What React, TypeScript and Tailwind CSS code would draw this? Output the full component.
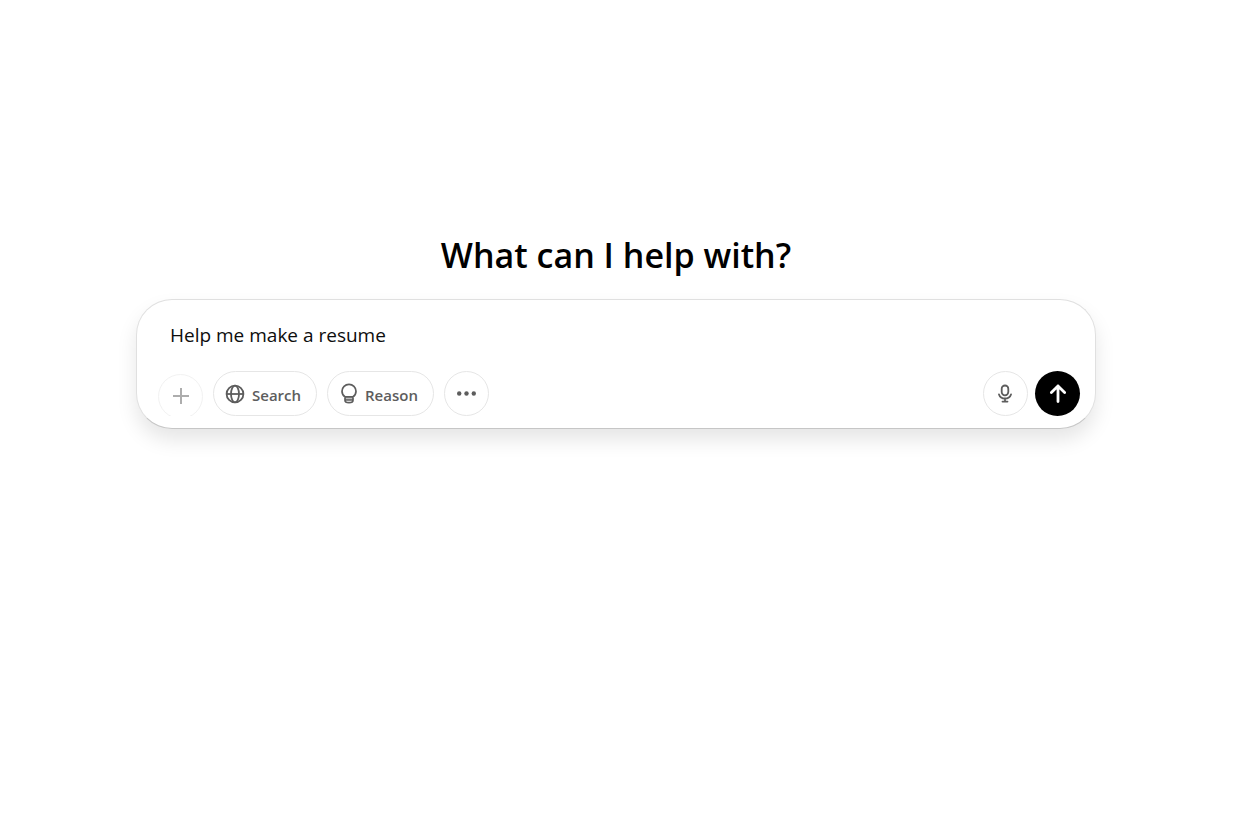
import { useState } from "react";

const outline =
  "flex h-[45px] shrink-0 items-center rounded-full border border-[#e6e6e6] bg-white text-[#5d5d5d]";

function GlobeIcon() {
  return (
    <svg width="20" height="20" viewBox="0 0 20 20" fill="none" stroke="currentColor" strokeWidth="1.8" aria-hidden="true">
      <circle cx="10" cy="10" r="8.4" />
      <ellipse cx="10" cy="10" rx="4" ry="8.4" />
      <path d="M1.6 10h16.8" />
    </svg>
  );
}

function BulbIcon() {
  return (
    <svg width="18" height="21" viewBox="0 0 18 21" aria-hidden="true">
      <path d="M5 14h8v3H5z" fill="currentColor" opacity="0.4" />
      <path
        d="M5.2 14C3.2 12.8 2 10.700 2 8.300a7 6.900 0 0 1 14 0c0 2.400-1.200 4.500-3.200 5.700M5 13.800h8M5 13.800v3.500c0 1.400 1.500 2.400 4 2.400s4-1 4-2.400v-3.500M5 17h8"
        fill="none"
        stroke="currentColor"
        strokeWidth="1.7"
        strokeLinejoin="round"
      />
    </svg>
  );
}

function MicIcon() {
  return (
    <svg width="15" height="19" viewBox="0 0 15 19" fill="none" stroke="currentColor" strokeWidth="1.8" strokeLinecap="round" aria-hidden="true">
      <rect x="3.7" y="1.5" width="6.6" height="9.8" rx="3.3" />
      <path d="M1 10.4c.8 2.5 3 4.1 6 4.1s5.200-1.600 6-4.100M7 14.500v3M4.500 17.600h5" />
    </svg>
  );
}

export default function App() {
  const [message, setMessage] = useState("Help me make a resume");

  return (
    <main className="min-h-screen bg-white pt-[230px] pr-5 font-['Open_Sans','Noto_Sans',sans-serif]">
      <div className="mx-auto w-full max-w-[960px]">
        <h1 className="text-center text-[34px] leading-[50px] font-semibold text-black">What can I help with?</h1>
        <form
          onSubmit={(event) => event.preventDefault()}
          className="mt-[19px] rounded-[36px] border border-[#e0e0e0] border-b-[#c6c6c6] bg-white pt-[19px] pr-[15px] pb-3 pl-[21px] shadow-[0_11px_20px_rgba(0,0,0,0.1)]"
        >
          <input
            type="text"
            aria-label="Message"
            value={message}
            onChange={(event) => setMessage(event.target.value)}
            className="block h-8 w-full bg-transparent px-3 text-[19px] text-[#0d0d0d] outline-none"
          />
          <div className="mt-5 flex items-center justify-between">
            <div className="flex items-end gap-[10px]">
              <div className="h-[42px] overflow-hidden opacity-50">
                <button type="button" aria-label="Attach" className={`${outline} w-[45px] justify-center`}>
                  <svg width="17" height="17" viewBox="0 0 17 17" stroke="currentColor" strokeWidth="2" aria-hidden="true">
                    <path d="M9 0v16M1 8h16" />
                  </svg>
                </button>
              </div>
              <button type="button" className={`${outline} w-[104px] gap-[7px] pl-[11px] text-[15px] font-semibold`}>
                <GlobeIcon />
                <span className="pt-[3px]">Search</span>
              </button>
              <button type="button" className={`${outline} w-[107px] gap-[7px] pl-3 text-[15px] font-semibold`}>
                <BulbIcon />
                <span className="pt-[3px]">Reason</span>
              </button>
              <button type="button" aria-label="More tools" className={`${outline} w-[45px] justify-center`}>
                <svg width="19" height="5" viewBox="0 0 19 5" fill="currentColor" aria-hidden="true">
                  <circle cx="2.2" cy="2.5" r="2.2" />
                  <circle cx="9.5" cy="2.5" r="2.2" />
                  <circle cx="16.8" cy="2.5" r="2.2" />
                </svg>
              </button>
            </div>
            <div className="flex gap-[7px]">
              <button type="button" aria-label="Dictate" className={`${outline} w-[45px] justify-center`}>
                <MicIcon />
              </button>
              <button
                type="submit"
                aria-label="Send"
                className="flex size-[45px] items-center justify-center rounded-full bg-black text-white"
              >
                <svg width="17" height="19" viewBox="0 0 17 19" fill="none" stroke="currentColor" strokeWidth="2.8" strokeLinecap="round" strokeLinejoin="round" aria-hidden="true">
                  <path d="M9 17.6V2M2.400 8.500L9 2l6.600 6.500" />
                </svg>
              </button>
            </div>
          </div>
        </form>
      </div>
    </main>
  );
}
